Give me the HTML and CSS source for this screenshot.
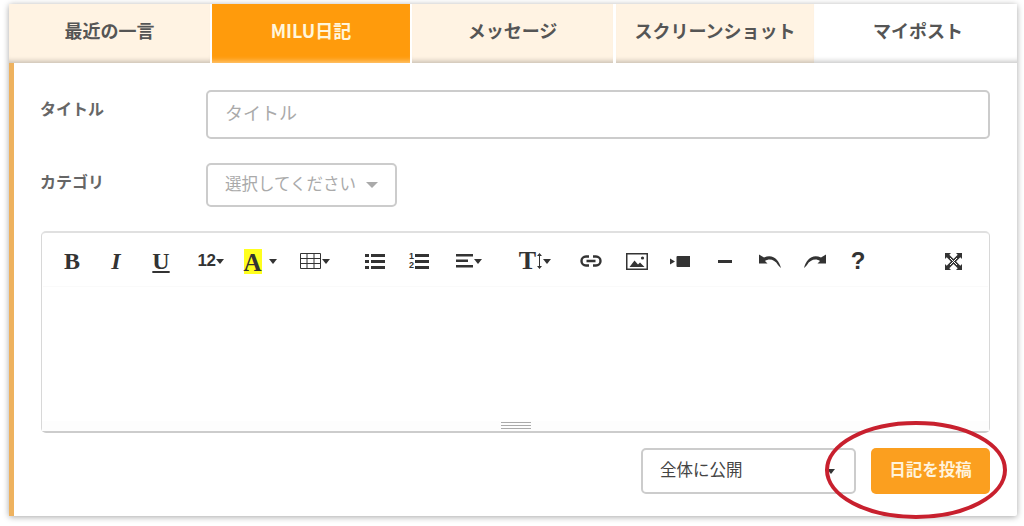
FILE: index.html
```html
<!DOCTYPE html>
<html lang="ja">
<head>
<meta charset="utf-8">
<title>MILU日記</title>
<link rel="stylesheet" href="styles.css">
</head>
<body>
<div class="card">
  <nav class="tabs">
    <a class="tab tab-a">最近の一言</a>
    <a class="tab tab-b active">MILU日記</a>
    <a class="tab tab-c">メッセージ</a>
    <a class="tab tab-d">スクリーンショット</a>
    <a class="tab tab-e current">マイポスト</a>
  </nav>
  <form class="panel">
    <div class="row row-title">
      <label class="label">タイトル</label>
      <div class="input">タイトル</div>
    </div>
    <div class="row row-cat">
      <label class="label">カテゴリ</label>
      <div class="select-cat">選択してください<span class="caret-grey"></span></div>
    </div>
    <div class="editor">
      <div class="toolbar">
        <span class="tb w44 serif b">B</span>
        <span class="tb w44 serif i">I</span>
        <span class="tb w46 serif u">U</span>
        <span class="tb w54 size">12<span class="caret small"></span></span>
        <span class="tb w44"><span class="hl serif">A</span><span class="caret gap6"></span></span>
        <span class="tb w66"><svg width="21" height="16" viewBox="0 0 21 16"><path d="M.5.5h20v15H.5zM.5 5.500h20M.5 10.500h20M7 .5v15M14 .5v15" fill="none" stroke="#333"/></svg><span class="caret small"></span></span>
        <span class="tb w44 ml5"><svg width="20" height="16" viewBox="0 0 20 16"><path d="M0 1h4v3H0zM0 7h4v3H0zM0 13h4v3H0zM6 1h14v3H6zM6 7h14v3H6zM6 13h14v3H6z" fill="#333"/></svg></span>
        <span class="tb w44"><span class="ol-nums">1<br>2</span><svg width="14" height="16" viewBox="0 0 14 16"><path d="M0 1h14v3H0zM0 7h14v3H0zM0 13h14v3H0z" fill="#333"/></svg></span>
        <span class="tb w56"><svg width="17" height="14" viewBox="0 0 17 14"><path d="M0 0h17v2.500H0zM0 5.500h12V8H0zM0 11h17v2.500H0z" fill="#333"/></svg><span class="caret small"></span></span>
        <span class="tb w68 ml4"><span class="serif lh">T</span><svg width="5" height="16" viewBox="0 0 5 16"><path d="M2.500 0l2.500 3H3v10h2l-2.500 3L0 13h2V3H0z" fill="#333"/></svg><span class="caret small"></span></span>
        <span class="tb w50 mln3"><svg width="22" height="12" viewBox="0 0 22 12"><path d="M9 1.500H6a4.500 4.500 0 0 0 0 9h3M13 1.500h3a4.500 4.500 0 0 1 0 9h-3M6.500 6h9" fill="none" stroke="#333" stroke-width="2.400"/></svg></span>
        <span class="tb w46 mln2"><svg width="22" height="17" viewBox="0 0 22 17"><rect x=".75" y=".75" width="20.500" height="15.500" fill="none" stroke="#333" stroke-width="1.500"/><circle cx="16.500" cy="5" r="1.600" fill="#333"/><path d="M3.500 14l5-6.500 3.500 4 2-2 4.500 4.500z" fill="#333"/></svg></span>
        <span class="tb w44 mln2"><svg width="20" height="11" viewBox="0 0 20 11"><path d="M0 2.500l5 3-5 3zM6.500 1a1 1 0 0 1 1-1H20v11H7.500a1 1 0 0 1-1-1z" fill="#333"/></svg></span>
        <span class="tb w44 ml1"><svg width="14" height="3" viewBox="0 0 14 3"><path d="M0 0h14v3H0z" fill="#333"/></svg></span>
        <span class="tb w46"><svg width="22" height="14" viewBox="0 0 22 14"><path d="M0 .5V9.500h8.500L6 7c4-3 10-1.500 13 4 1 1 3 3 3 3C20 6 14-.5 5 3.500z" fill="#333"/></svg></span>
        <span class="tb w44"><svg width="22" height="14" viewBox="0 0 22 14"><path d="M22 .5V9.500h-8.500L16 7C12 4 6 5.500 3 11c-1 1-3 3-3 3C2 6 8-.5 17 3.500z" fill="#333"/></svg></span>
        <span class="tb w42 help">?</span>
        <span class="spring"></span>
        <span class="tb w44"><svg width="17" height="17" viewBox="0 0 17 17"><path d="M0 0h6L4.300 1.700 8.500 5.900 12.700 1.700 11 0h6v6l-1.700-1.700-4.200 4.200 4.200 4.200L17 11v6h-6l1.700-1.700-4.200-4.200-4.200 4.200L6 17H0v-6l1.700 1.700 4.200-4.200-4.200-4.200L0 6z" fill="#333"/><path d="M5 5l7 7M12 5l-7 7" stroke="#fff" stroke-width="1"/></svg></span>
      </div>
      <div class="editable"></div>
      <div class="resize"><span></span></div>
    </div>
    <div class="actions">
      <div class="select-pub">全体に公開<span class="caret dark"></span></div>
      <button class="submit" type="button">日記を投稿</button>
    </div>
  </form>
</div>
<svg class="circle" width="190" height="106" viewBox="0 0 190 106"><ellipse cx="95" cy="53" rx="89" ry="47" fill="none" stroke="#c8202e" stroke-width="4"/></svg>
</body>
</html>
```
FILE: styles.css
```css
* { box-sizing: border-box; }
html, body { margin: 0; height: 100%; }
body {
  padding: 4px 7px 10px 9px;
  background: #fff;
  font-family: "Noto Sans CJK JP", "Liberation Sans", sans-serif;
  color: #555;
  position: relative;
  overflow: hidden;
}
.card {
  height: 512px;
  display: flex;
  flex-direction: column;
  background: #fff;
  box-shadow: 0 1px 6px rgba(0,0,0,.35);
  border-radius: 2px;
}
.tabs { display: flex; height: 59px; flex: none; gap: 2px; background: #fff; }
.tab {
  display: flex;
  align-items: center;
  justify-content: center;
  padding-bottom: 8px;
  background: #fff3e3;
  font-size: 18px;
  font-weight: 700;
  color: #555;
  box-shadow: inset 0 -6px 5px -4px rgba(0,0,0,.22);
}
.tab-a { width: 201px; }
.tab-b { width: 198px; }
.tab-c { width: 201px; }
.tab-d { width: 198px; margin-left: 1px; }
.tab-e { flex: 1; margin-left: -2px; padding-left: 5px; }
.tab.active { background: #ff9b0c; color: #fff6dc; box-shadow: inset 0 -6px 5px -4px rgba(255,255,255,.45); }
.tab.current { background: #fff; }
.panel {
  flex: 1;
  border-left: 5px solid #eeb25f;
  padding: 27px 27px 0 26px;
  display: flex;
  flex-direction: column;
}
.row { display: flex; }
.row-title { height: 49px; }
.row-cat { height: 44px; margin-top: 24px; }
.label { width: 166px; font-size: 16px; font-weight: 700; color: #666; line-height: 36px; }
.row-cat .label { line-height: 37px; }
.input {
  flex: 1;
  border: 2px solid #ccc;
  border-radius: 5px;
  padding-left: 17px;
  font-size: 18px;
  line-height: 41px;
  color: #aaa;
}
.select-cat {
  width: 191px;
  border: 2px solid #ccc;
  border-radius: 5px;
  padding: 0 0 4px 17px;
  font-size: 16.500px;
  color: #aaa;
  display: flex;
  align-items: center;
}
.caret-grey { width: 0; height: 0; margin: 4px 0 0 10px; border: 6px solid transparent; border-bottom: 0; border-top-color: #aaa; }
.editor {
  margin-top: 24px;
  margin-left: 1px;
  height: 202px;
  border: 1px solid #d8d8d8;
  border-top: 2px solid #e0e0e0;
  border-bottom: 2px solid #ccc;
  border-radius: 5px;
  display: flex;
  flex-direction: column;
}
.toolbar {
  height: 53px;
  flex: none;
  display: flex;
  align-items: center;
  padding: 3px 14px 0 8px;
  color: #333;
  box-shadow: 0 1px 1px -1px rgba(0,0,0,.12);
}
.tb { display: flex; align-items: center; justify-content: center; height: 30px; flex: none; }
.w42 { width: 42px; } .w44 { width: 44px; } .w46 { width: 46px; }
.w50 { width: 50px; } .w54 { width: 54px; } .w56 { width: 56px; } .w66 { width: 66px; } .w68 { width: 68px; }
.ml1 { margin-left: 1px; } .ml4 { margin-left: 4px; } .ml5 { margin-left: 5px; }
.mln2 { margin-left: -2px; } .mln3 { margin-left: -3px; }
.spring { flex: 1; }
.serif { font-family: "Liberation Serif", serif; font-size: 24px; font-weight: 700; color: #333; line-height: 1; }
.i { font-style: italic; }
.u { text-decoration: underline; text-underline-offset: 2px; text-decoration-thickness: 2px; }
.size { font-family: "Liberation Sans", sans-serif; font-size: 17px; font-weight: 700; letter-spacing: -.5px; }
.hl { background: #ffff1e; width: 18px; height: 25px; line-height: 27px; font-size: 25px; text-align: center; display: block; }
.caret { width: 0; height: 0; border: 4px solid transparent; border-bottom: 0; border-top: 5px solid #333; flex: none; }
.gap6 { margin-left: 7px; }
.small { margin-left: 1px; }
.ol-nums { font-family: "Liberation Sans", sans-serif; font-size: 9px; line-height: 9px; font-weight: 700; margin-right: 1px; color: #333; }
.lh { font-size: 26px; margin-right: 1px; }
.help { font-family: "Liberation Sans", sans-serif; font-size: 24px; font-weight: 700; color: #333; }
.editable { flex: 1; }
.resize { height: 10px; flex: none; display: flex; justify-content: center; padding-top: 1px; background: #fdfdfd; }
.resize span { width: 30px; height: 7px; border-top: 1px solid #aaa; border-bottom: 1px solid #aaa; background: linear-gradient(#aaa,#aaa) center/100% 1px no-repeat; }
.actions { display: flex; justify-content: flex-end; gap: 15px; margin-top: 15px; }
.select-pub {
  width: 215px;
  height: 46px;
  border: 2px solid #ccc;
  border-radius: 5px;
  padding: 0 0 4px 17px;
  font-size: 16.500px;
  color: #444;
  display: flex;
  align-items: center;
}
.dark { margin: 4px 0 0 84px; border-width: 5px 4.500px 0; border-top-color: #333; }
.submit {
  width: 119px;
  height: 46px;
  border: 0;
  border-radius: 5px;
  padding: 0 0 4px;
  background: #fb9f1f;
  color: #fff3dc;
  font-family: inherit;
  font-size: 16.500px;
  font-weight: 700;
}
.circle { position: absolute; left: 821px; top: 417px; pointer-events: none; }
```
